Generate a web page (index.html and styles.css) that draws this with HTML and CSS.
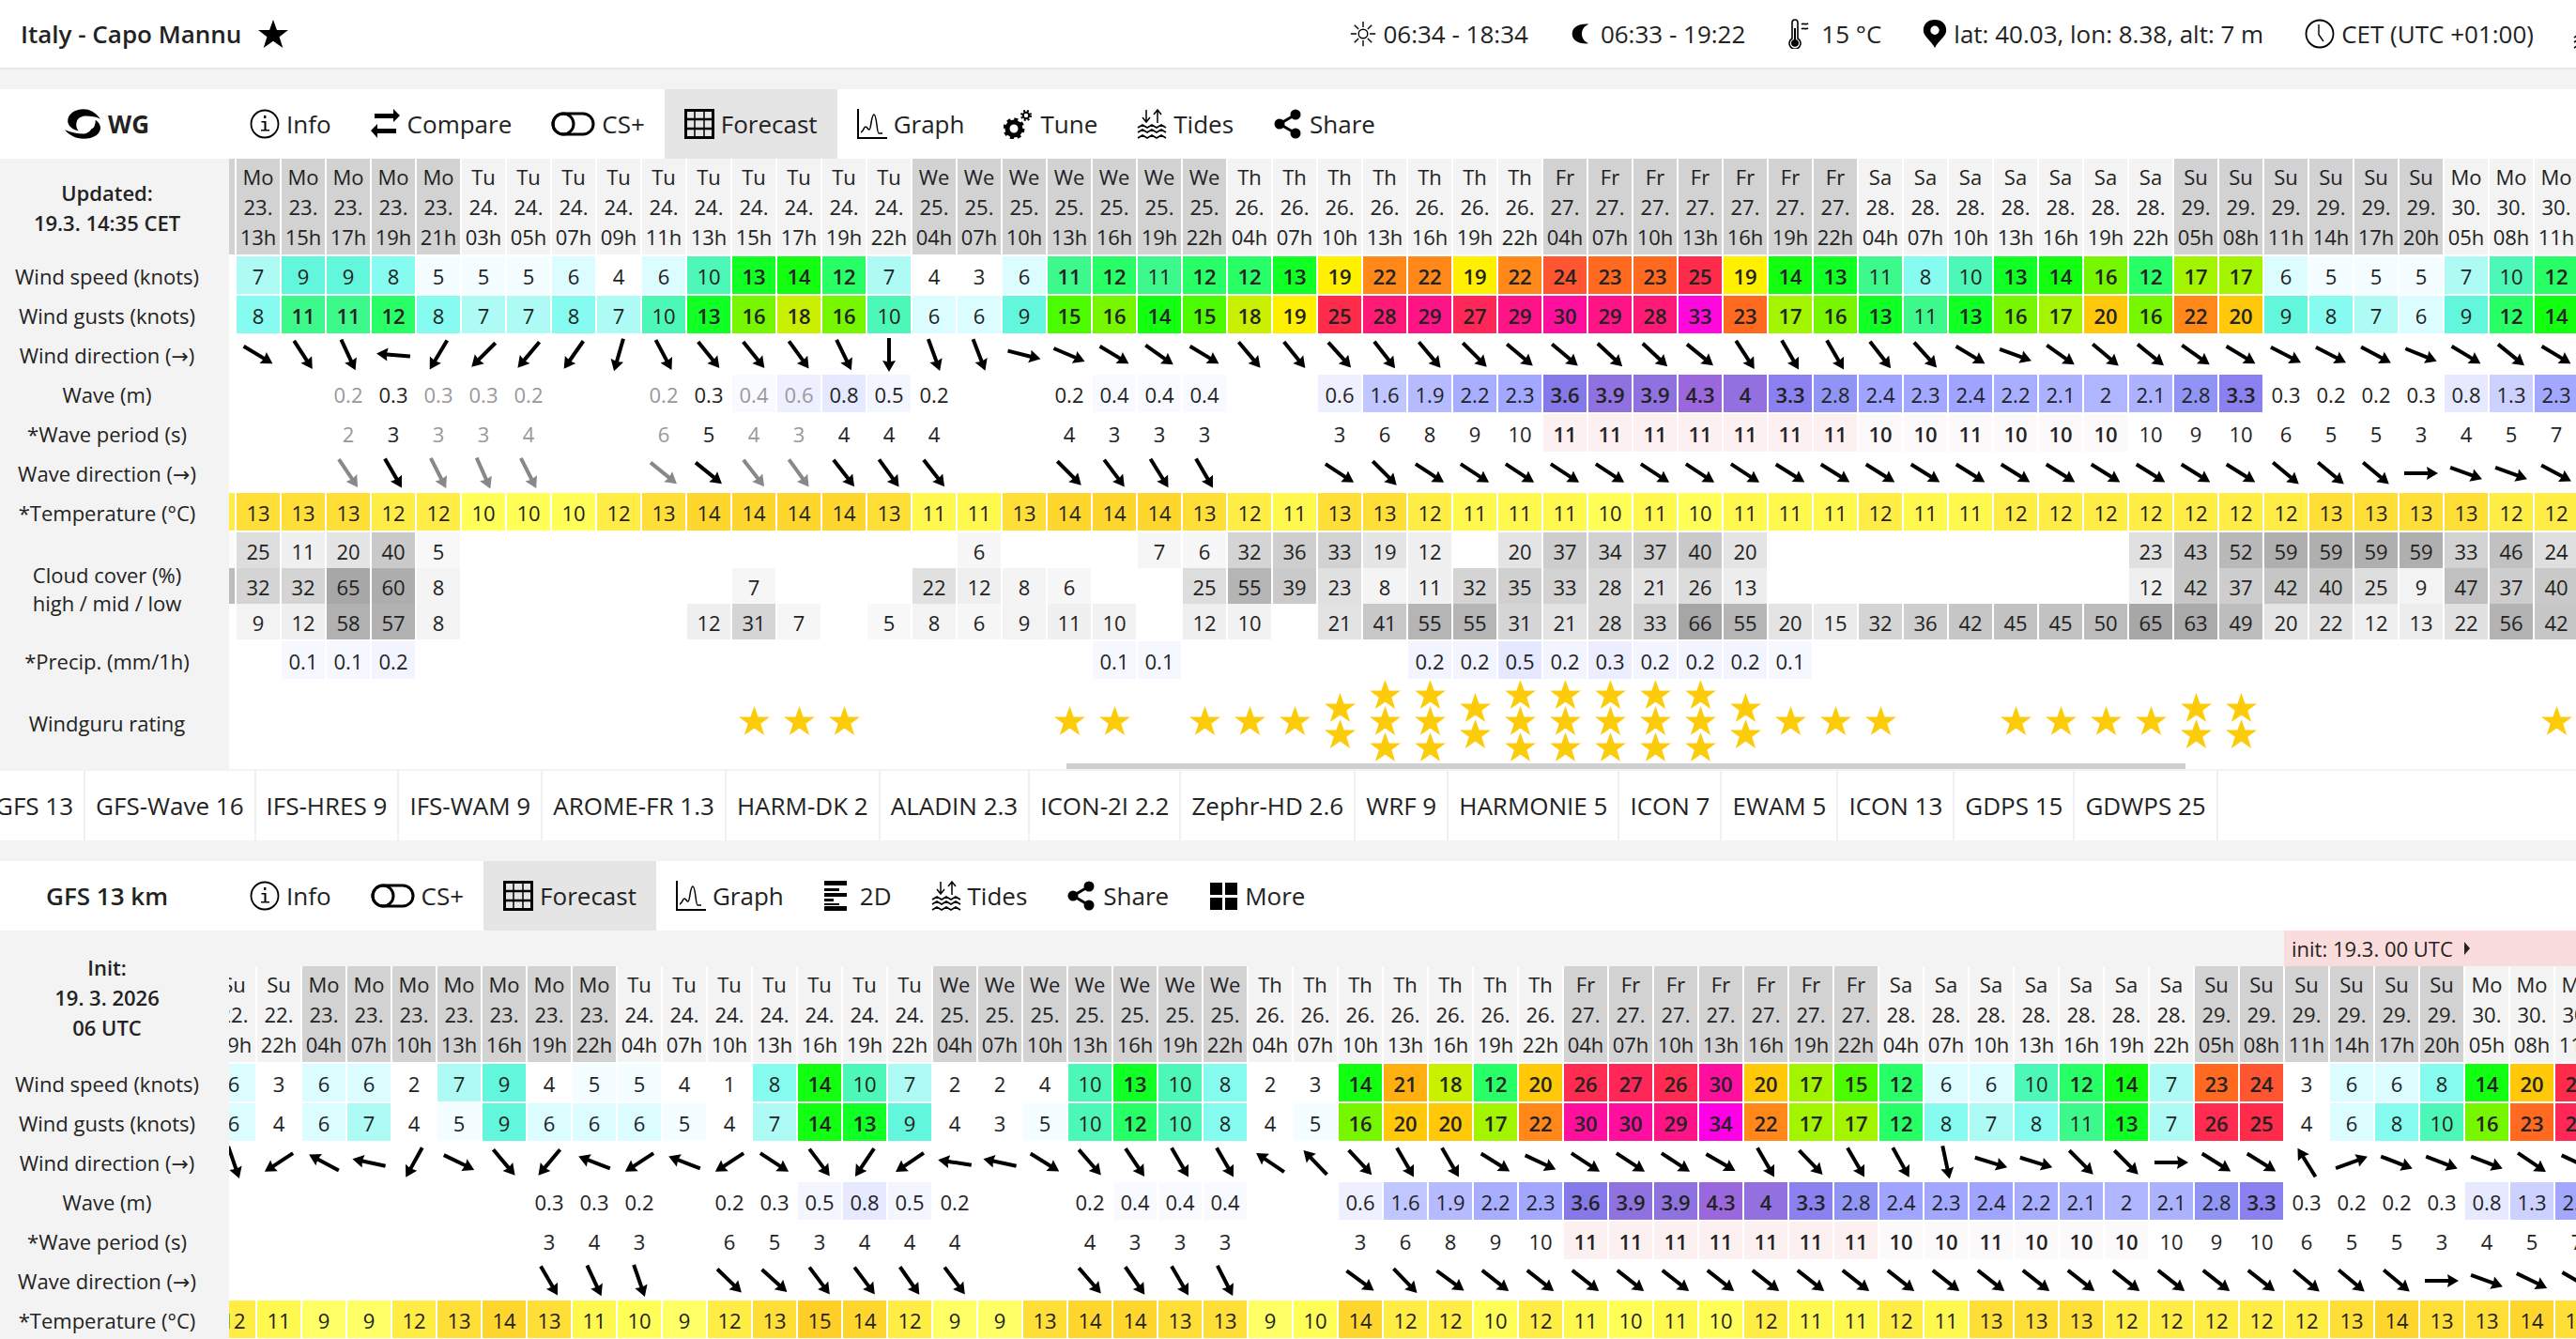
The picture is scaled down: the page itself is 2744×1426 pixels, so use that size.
FILE: index.html
```html
<!DOCTYPE html>
<html lang="en">
<head>
  <meta charset="UTF-8" />
  <title>Italy - Capo Mannu</title>
  <link rel="stylesheet" href="styles.css">
</head>
<body>
  <svg class="sprite" xmlns="http://www.w3.org/2000/svg">
    <symbol id="i-sun" viewBox="0 0 32 32"><circle cx="16" cy="16" r="5.5" fill="none" stroke="#000" stroke-width="1.6"/><path d="M16 1v7M16 24v7M1 16h7M24 16h7M5.4 5.4l5 5M21.6 21.6l5 5M5.4 26.600l5-5M21.600 10.400l5-5" stroke="#000" stroke-width="1.600"/></symbol>
    <symbol id="i-moon" viewBox="0 0 32 32"><path d="M24 5C12 4 5 9 5 16s7 12 19 11c-5-2-8-6-8-11s3-9 8-11z"/></symbol>
    <symbol id="i-therm" viewBox="0 0 32 32"><path d="M7 3a3 3 0 0 1 6 0v17a6 6 0 1 1-6 0z" fill="none" stroke="#000" stroke-width="1.600" transform="translate(0 1)"/><path d="M9 10h2v12a4 4 0 1 1-2 0z"/><path d="M17 6c2-2 4 1 7-1M17 11c2-2 4 1 7-1" fill="none" stroke="#000" stroke-width="1.600"/></symbol>
    <symbol id="i-pin" viewBox="0 0 32 32"><path fill-rule="evenodd" d="M16 0C8 0 3 5 3 12c0 7 9 12 13 20 4-8 13-13 13-20C29 5 24 0 16 0zm0 7a5 5 0 1 1 0 10 5 5 0 0 1 0-10z"/></symbol>
    <symbol id="i-clock" viewBox="0 0 32 32"><circle cx="16" cy="16" r="14.500" fill="none" stroke="#000" stroke-width="1.800"/><path d="M15 6v11l5 7" fill="none" stroke="#000" stroke-width="1.400"/></symbol>
    <symbol id="i-info" viewBox="0 0 32 32"><circle cx="16" cy="16" r="14.500" fill="none" stroke="#000" stroke-width="1.800"/><path d="M15 7h2.400v3H15zM12.500 13h5v9H21v1.600h-9V22h3.500v-7.400h-3z"/></symbol>
    <symbol id="i-compare" viewBox="0 0 32 32"><path d="M4 5h20V0l7 7-7 7V10H4zM27 21H7v-5l-7 7 7 8v-5h20z"/></symbol>
    <symbol id="i-cs" viewBox="0 0 47 32"><rect x="2" y="5" width="43" height="22" rx="11" fill="none" stroke="#000" stroke-width="3"/><circle cx="13" cy="16" r="11" fill="none" stroke="#000" stroke-width="3"/></symbol>
    <symbol id="i-grid" viewBox="0 0 32 32"><path d="M1.500 1.500h29v29h-29z" fill="none" stroke="#000" stroke-width="3"/><path d="M11 2v28M21 2v28" stroke="#000" stroke-width="1.500"/><path d="M2 11h28M2 21h28" stroke="#000" stroke-width="2.500"/></symbol>
    <symbol id="i-graph" viewBox="0 0 32 32"><path d="M1 0v31h31" fill="none" stroke="#000" stroke-width="2"/><path d="M4 25c3-1 3-6 5-6s2 3 4 3 2-16 5-16 3 20 5 20 2 0 4 0" fill="none" stroke="#000" stroke-width="1.500"/></symbol>
    <symbol id="i-tune" viewBox="0 0 32 32"><circle cx="11" cy="21" r="7" fill="none" stroke="#000" stroke-width="5"/><circle cx="11" cy="21" r="10" fill="none" stroke="#000" stroke-width="3" stroke-dasharray="4 3.850"/><circle cx="24" cy="7" r="3.200" fill="none" stroke="#000" stroke-width="2"/><circle cx="24" cy="7" r="5" fill="none" stroke="#000" stroke-width="2" stroke-dasharray="2 2"/></symbol>
    <symbol id="i-tides" viewBox="0 0 32 32"><path d="M10 1v12M6 9l4 5 4-5M22 15V1M18 6l4-5 4 5" fill="none" stroke="#000" stroke-width="1.500"/><path d="M1 20l5-3 5 3 5-3 5 3 5-3 5 3M1 25l5-3 5 3 5-3 5 3 5-3 5 3M1 31l5-3 5 3 5-3 5 3 5-3 5 3" fill="none" stroke="#000" stroke-width="1.700"/></symbol>
    <symbol id="i-share" viewBox="0 0 32 32"><circle cx="24" cy="6" r="5.500"/><circle cx="7" cy="16" r="5.500"/><circle cx="24" cy="26" r="5.500"/><path d="M24 6L7 16l17 10" fill="none" stroke="#000" stroke-width="3"/></symbol>
    <symbol id="i-2d" viewBox="0 0 32 32"><path d="M1 0h24v5H1zM1 8h16v3H1zM1 13h24v4H1zM1 19h10v3H1zM1 24h16v2H1zM1 27h24v5H1z"/></symbol>
    <symbol id="i-more" viewBox="0 0 32 32"><path d="M2 2h13v13H2zM18 2h13v13H18zM2 18h13v13H2zM18 18h13v13H18z"/></symbol>
    <symbol id="i-wg" viewBox="0 0 36 30"><path d="M36 10C31 3 25 0 19 0 10 0 3 5 3 12c0 5 5 9 11 10-2-2-3-6-2-9 1-4 5-6 9-6 6 0 11 1 15 3z"/><path d="M0 21c4 5 11 9 19 9 10 0 17-5 17-11 0-3-2-6-5-8 0 4-1 8-4 9-2 3-5 5-8 5-6 0-12-1-19-4z"/></symbol>
    <symbol id="i-star" viewBox="0 0 34 32"><path d="M17 0l4.200 11.800H34l-10 7.600L28 32 17 24.200 6 32l4-12.600L0 11.800h12.800z"/></symbol>
    <symbol id="i-arrow" viewBox="-20 -9 40 18"><path d="M-18-2L7-2 6-7 18 0 6 7 7 2-18 2z"/></symbol>
  </svg>

  <header class="topbar">
    <h1 class="spot">Italy - Capo Mannu <svg class="fav"><use href="#i-star"/></svg></h1>
    <div class="facts">
      <span class="fact"><svg class="ico ico-sun"><use href="#i-sun"/></svg>06:34 - 18:34</span>
      <span class="fact"><svg class="ico ico-moon"><use href="#i-moon"/></svg>06:33 - 19:22</span>
      <span class="fact"><svg class="ico ico-therm"><use href="#i-therm"/></svg>15 °C</span>
      <span class="fact"><svg class="ico ico-pin"><use href="#i-pin"/></svg>lat: 40.03, lon: 8.38, alt: 7 m</span>
      <span class="fact"><svg class="ico ico-clock"><use href="#i-clock"/></svg>CET (UTC +01:00)</span>
      <span class="fact"><svg class="ico"><use href="#i-tides"/></svg></span>
    </div>
  </header>

  <section class="panel">
    <nav class="tabs">
      <div class="tabs-title"><svg class="ico ico-wg"><use href="#i-wg"/></svg>WG</div>
      <a class="tab"><svg class="ico"><use href="#i-info"/></svg>Info</a>
      <a class="tab"><svg class="ico"><use href="#i-compare"/></svg>Compare</a>
      <a class="tab"><svg class="ico ico-cs"><use href="#i-cs"/></svg>CS+</a>
      <a class="tab active"><svg class="ico"><use href="#i-grid"/></svg>Forecast</a>
      <a class="tab"><svg class="ico"><use href="#i-graph"/></svg>Graph</a>
      <a class="tab"><svg class="ico"><use href="#i-tune"/></svg>Tune</a>
      <a class="tab"><svg class="ico"><use href="#i-tides"/></svg>Tides</a>
      <a class="tab"><svg class="ico"><use href="#i-share"/></svg>Share</a>
    </nav>
    <div class="fc">
      <div class="labels">
        <div class="lbl lbl-head"><b>Updated:</b><b>19.3. 14:35 CET</b></div>
        <div class="lbl">Wind speed (knots)</div>
        <div class="lbl">Wind gusts (knots)</div>
        <div class="lbl"><span>Wind direction (<span class="arw">→</span>)</span></div>
        <div class="lbl">Wave (m)</div>
        <div class="lbl">*Wave period (s)</div>
        <div class="lbl"><span>Wave direction (<span class="arw">→</span>)</span></div>
        <div class="lbl">*Temperature (°C)</div>
        <div class="lbl lbl-cloud"><span>Cloud cover (%)</span><span>high / mid / low</span></div>
        <div class="lbl">*Precip. (mm/1h)</div>
        <div class="lbl lbl-rating">Windguru rating</div>
      </div>
      <div class="scroller">
        <div class="track track-wg" id="wg"></div>
        <div class="scrollbar"></div>
      </div>
    </div>
  </section>

  <nav class="models">
    <a class="model model-first">GFS 13</a>
    <a class="model">GFS-Wave 16</a>
    <a class="model">IFS-HRES 9</a>
    <a class="model">IFS-WAM 9</a>
    <a class="model">AROME-FR 1.3</a>
    <a class="model">HARM-DK 2</a>
    <a class="model">ALADIN 2.3</a>
    <a class="model">ICON-2I 2.2</a>
    <a class="model">Zephr-HD 2.6</a>
    <a class="model">WRF 9</a>
    <a class="model">HARMONIE 5</a>
    <a class="model">ICON 7</a>
    <a class="model">EWAM 5</a>
    <a class="model">ICON 13</a>
    <a class="model">GDPS 15</a>
    <a class="model">GDWPS 25</a>
  </nav>

  <section class="panel panel-gfs">
    <nav class="tabs">
      <div class="tabs-title tabs-title-b">GFS 13 km</div>
      <a class="tab"><svg class="ico"><use href="#i-info"/></svg>Info</a>
      <a class="tab"><svg class="ico ico-cs"><use href="#i-cs"/></svg>CS+</a>
      <a class="tab active"><svg class="ico"><use href="#i-grid"/></svg>Forecast</a>
      <a class="tab"><svg class="ico"><use href="#i-graph"/></svg>Graph</a>
      <a class="tab"><svg class="ico"><use href="#i-2d"/></svg>2D</a>
      <a class="tab"><svg class="ico"><use href="#i-tides"/></svg>Tides</a>
      <a class="tab"><svg class="ico"><use href="#i-share"/></svg>Share</a>
      <a class="tab"><svg class="ico"><use href="#i-more"/></svg>More</a>
    </nav>
    <div class="fc">
      <div class="labels">
        <div class="lbl lbl-head lbl-head-b"><b>Init:</b><b>19. 3. 2026</b><b>06 UTC</b></div>
        <div class="lbl">Wind speed (knots)</div>
        <div class="lbl">Wind gusts (knots)</div>
        <div class="lbl"><span>Wind direction (<span class="arw">→</span>)</span></div>
        <div class="lbl">Wave (m)</div>
        <div class="lbl">*Wave period (s)</div>
        <div class="lbl"><span>Wave direction (<span class="arw">→</span>)</span></div>
        <div class="lbl">*Temperature (°C)</div>
      </div>
      <div class="scroller">
        <div class="initrow"><span class="initbadge">init: 19.3. 00 UTC <i class="tri"></i></span></div>
        <div class="track track-gfs" id="gfs"></div>
      </div>
    </div>
  </section>

  <script>
    // day runs: [name, date, isDark, hours]
    const h3 = '04 07 10 13 16 19 22';
    const wgDays = [
      ['Mo', 23, 1, '11 13 15 17 19 21'],
      ['Tu', 24, 0, '03 05 07 09 11 13 15 17 19 22'],
      ['We', 25, 1, h3], ['Th', 26, 0, h3], ['Fr', 27, 1, h3], ['Sa', 28, 0, h3],
      ['Su', 29, 1, '05 08 11 14 17 20'],
      ['Mo', 30, 0, '05 08 11']
    ];
    const gfsDays = [
      ['Su', 22, 0, '19 22'],
      ['Mo', 23, 1, h3], ['Tu', 24, 0, h3], ['We', 25, 1, h3], ['Th', 26, 0, h3], ['Fr', 27, 1, h3], ['Sa', 28, 0, h3],
      ['Su', 29, 1, '05 08 11 14 17 20'],
      ['Mo', 30, 0, '05 08 11']
    ];

    // "_" = empty, "~" = greyed out, "!" = bold, "*" = bold on a paler cell.
    // First value of each row is the clipped column.
    const wg = {
      speed: '_ 7 9 9 8 5 5 5 6 4 6 10 13 14 12 7 4 3 6 11! 12 11 12 12 13 19 22 22 19 22 24 23 23 25 19 14 13 11 8 10 13 14 16 12 17 17 6 5 5 5 7 10 12',
      gust: '_ 8 11! 11! 12 8 7 7 8 7 10 13 16 18 16 10 6 6 9 15 16 14 15 18 19 25 28 29 27 29 30 29 28 33 23 17 16 13 11 13 16 17 20 16 22 20 9 8 7 6 9 12 14',
      dir: '_ 31 57 65 185 121 135 130 125 106 62 51 51 54 64 90 70 69 14 23 31 35 31 50 51 48 52 50 45 40 40 43 43 39 57 60 60 52 48 31 20 35 40 39 35 31 27 27 28 22 31 39 31',
      wave: '_ _ _ ~0.2 0.3 ~0.3 ~0.3 ~0.2 _ _ ~0.2 0.3 ~0.4 ~0.6 0.8 0.5 0.2 _ _ 0.2 0.4 0.4 0.4 _ _ 0.6 1.6 1.9 2.2 2.3 3.6 3.9 3.9 4.3 4 3.3 2.8 2.4 2.3 2.4 2.2 2.1 2 2.1 2.8 3.3 0.3 0.2 0.2 0.3 0.8 1.3 2.3',
      period: '_ _ _ ~2 3 ~3 ~3 ~4 _ _ ~6 5 ~4 ~3 4 4 4 _ _ 4 3 3 3 _ _ 3 6 8 9 10 11! 11! 11! 11! 11! 11! 11! 10* 10* 11* 10* 10* 10* 10 9 10 6 5 5 3 4 5 7',
      wdir: '_ _ _ ~56 60 ~63 ~66 ~63 _ _ ~39 39 ~52 ~54 52 54 52 _ _ 45 53 58 60 _ _ 33 45 33 33 33 33 33 33 33 33 32 32 32 32 32 32 32 32 32 32 32 40 40 40 0 20 20 28',
      temp: '12 13 13 13 12 12 10 10 10 12 13 14 14 14 14 13 11 11 13 14 14 14 13 12 11 13 13 12 11 11 11 10 11 10 11 11 11 12 11 11 12 12 12 12 12 12 12 13 13 13 13 12 12 13',
      hi: '4 25 11 20 40 5 _ _ _ _ _ _ _ _ _ _ _ 6 _ _ _ 7 6 32 36 33 19 12 _ 20 37 34 37 40 20 _ _ _ _ _ _ _ _ 23 43 52 59 59 59 59 33 46 24',
      mid: '50 32 32 65 60 8 _ _ _ _ _ _ 7 _ _ _ 22 12 8 6 _ _ 25 55 39 23 8 11 32 35 33 28 21 26 13 _ _ _ _ _ _ _ _ 12 42 37 42 40 25 9 47 37 40',
      low: '_ 9 12 58 57 8 _ _ _ _ _ 12 31 7 _ 5 8 6 9 11 10 _ 12 10 _ 21 41 55 55 31 21 28 33 66 55 20 15 32 36 42 45 45 50 65 63 49 20 22 12 13 22 56 42',
      rain: '_ _ 0.1 0.1 0.2 _ _ _ _ _ _ _ _ _ _ _ _ _ _ _ 0.1 0.1 _ _ _ _ _ 0.2 0.2 0.5 0.2 0.3 0.2 0.2 0.2 0.1',
      stars: '0 0 0 0 0 0 0 0 0 0 0 0 1 1 1 0 0 0 0 1 1 0 1 1 1 2 3 3 2 3 3 3 3 3 2 1 1 1 0 0 1 1 1 1 2 2 0 0 0 0 0 0 1'
    };
    const gfs = {
      speed: '6 3 6 6 2 7 9 4 5 5 4 1 8 14 10 7 2 2 4 10 13 10 8 2 3 14 21 18 12 20 26 27 26 30 20 17 15 12 6 6 10 12 14 7 23 24 3 6 6 8 14 20 25',
      gust: '6 4 6 7 4 5 9 6 6 6 5 4 7 14 13 9 4 3 5 10 12 10 8 4 5 16 20 20 17 22 30 30 29 34 22 17 17 12 8 7 8 11 13 7 26 25 4 6 8 10 16 23 27',
      dir: '71 147 208 192 119 26 50 130 201 147 201 147 33 53 124 146 189 192 32 49 56 60 60 214 226 47 60 60 32 25 33 33 33 30 60 46 60 61 78 17 17 45 45 0 32 32 238 340 21 21 21 34 25',
      wave: '_ _ _ _ _ _ _ 0.3 0.3 0.2 _ 0.2 0.3 0.5 0.8 0.5 0.2 _ _ 0.2 0.4 0.4 0.4 _ _ 0.6 1.6 1.9 2.2 2.3 3.6 3.9 3.9 4.3 4 3.3 2.8 2.4 2.3 2.4 2.2 2.1 2 2.1 2.8 3.3 0.3 0.2 0.2 0.3 0.8 1.3 2.3',
      period: '_ _ _ _ _ _ _ 3 4 3 _ 6 5 3 4 4 4 _ _ 4 3 3 3 _ _ 3 6 8 9 10 11! 11! 11! 11! 11! 11! 11! 10* 10* 11* 10* 10* 10* 10 9 10 6 5 5 3 4 5 7',
      wdir: '_ _ _ _ _ _ _ 60 65 71 _ 44 42 53 53 55 53 _ _ 49 55 60 63 _ _ 36 46 36 38 38 38 38 38 38 38 38 38 38 38 38 38 38 38 38 38 38 40 40 40 0 20 26 30',
      temp: '12 11 9 9 12 13 14 13 11 10 9 12 13 15 14 12 9 9 13 14 14 13 13 9 10 14 12 12 10 12 11 10 11 10 12 11 11 12 11 13 13 13 12 12 12 12 12 13 14 13 13 14 13'
    };

    const windColors = {
      0: '#ffffff', 1: '#ffffff', 2: '#ffffff', 3: '#ffffff', 4: '#ffffff', 5: '#f4fdff', 6: '#dcfdff', 7: '#aefbf6', 8: '#86fbf0', 9: '#62f6dc',
      10: '#4df7b8', 11: '#3df98c', 12: '#28ff66', 13: '#10ff24', 14: '#12ff12', 15: '#4cfb00', 16: '#76f700', 17: '#a2f400', 18: '#c8f000',
      19: '#fff000', 20: '#ffc808', 21: '#ffb010', 22: '#ff8818', 23: '#ff6a20', 24: '#ff5530', 25: '#ff2b4b', 26: '#ff2b50', 27: '#ff2658',
      28: '#ff1a78', 29: '#ff1488', 30: '#ff0f9e', 33: '#ff08dc', 34: '#ff00e6'
    };
    const waveColors = {
      0.4: '#f9faff', 0.5: '#f3f5ff', 0.6: '#eef0ff', 0.8: '#e6e9ff', 1.3: '#cdd1ff', 1.6: '#c0c6ff', 1.9: '#b6bbff', 2: '#b0b5ff', 2.1: '#adb2ff',
      2.2: '#a8aeff', 2.3: '#a2a8ff', 2.4: '#9ea4ff', 2.8: '#8f94f5', 3.3: '#8a80f0', 3.6: '#8578e8', 3.9: '#8f72e0', 4: '#9270e0', 4.3: '#9a68dc'
    };
    const tempColors = { 9: '#ffff66', 10: '#ffff58', 11: '#fff84e', 12: '#ffec44', 13: '#ffde38', 14: '#ffd62e', 15: '#ffcf28' };
    const rainColors = { 0.1: '#f6f8ff', 0.2: '#f2f4ff', 0.3: '#eceeff', 0.5: '#e6e8ff' };

    function grey(v) {
      const c = Math.round(255 - v * 1.35);
      return `rgb(${c},${c},${c})`;
    }

    function parse(s) {
      const text = s.replace(/[~!*]/g, '');
      return {
        text: text,
        num: parseFloat(text),
        faded: s[0] === '~',
        strong: s.endsWith('!') || s.endsWith('*'),
        pale: s.endsWith('*')
      };
    }

    function cell(bg, cls, html) {
      const style = bg ? ` style="background-color:${bg}"` : '';
      return `<div class="cell ${cls}"${style}>${html}</div>`;
    }

    function numRow(src, kind) {
      return src.split(' ').map((s, i) => {
        if (s === '_') return cell('', '', '');
        const v = parse(s);
        let bg = '', cls = v.faded ? 'faded' : '';
        if (kind === 'wind') { bg = windColors[v.num]; if (v.num >= 12 || v.strong) cls += ' strong'; }
        if (kind === 'wave') { bg = waveColors[v.num]; if (v.num >= 3) cls += ' strong'; }
        if (kind === 'period' && v.strong) { cls += ' strong'; bg = v.pale ? '#fbf9fa' : '#fdf0f0'; }
        if (kind === 'temp') bg = tempColors[v.num];
        if (kind === 'rain') bg = rainColors[v.num];
        return cell(bg, cls, (i === 0 && src === wg.temp) ? '' : v.text);
      }).join('');
    }

    function cloudRow(src) {
      return src.split(' ').map((s, i) => {
        if (s === '_') return cell('', '', '');
        return cell(grey(parseFloat(s)), '', i === 0 ? '' : s);
      }).join('');
    }

    function arrowRow(src) {
      return src.split(' ').map(s => {
        if (s === '_') return cell('', '', '');
        const v = parse(s);
        return cell('', v.faded ? 'faded' : '',
          `<svg class="arrow" style="transform:rotate(${v.num}deg)"><use href="#i-arrow"/></svg>`);
      }).join('');
    }

    function starRow(src) {
      return src.split(' ').map(s => {
        let html = '';
        for (let i = 0; i < parseInt(s, 10); i++) html += '<svg class="star"><use href="#i-star"/></svg>';
        return `<div class="cell cell-stars">${html}</div>`;
      }).join('');
    }

    function headRow(days, blankFirst) {
      let out = '';
      let n = 0;
      days.forEach(d => {
        d[3].split(' ').forEach(h => {
          const txt = (blankFirst && n === 0) ? '' : `<span>${d[0]}</span><span>${d[1]}.</span><span>${h}h</span>`;
          out += `<div class="cell head${d[2] ? ' dark' : ''}">${txt}</div>`;
          n++;
        });
      });
      return out;
    }

    function row(cls, html) {
      return `<div class="row ${cls}">${html}</div>`;
    }

    function render(el, days, d) {
      let html = row('row-head', headRow(days, !!d.hi));
      html += row('', numRow(d.speed, 'wind'));
      html += row('', numRow(d.gust, 'wind'));
      html += row('', arrowRow(d.dir));
      html += row('', numRow(d.wave, 'wave'));
      html += row('', numRow(d.period, 'period'));
      html += row('', arrowRow(d.wdir));
      html += row('', numRow(d.temp, 'temp'));
      if (d.hi) {
        html += row('row-cloud row-cloud-top', cloudRow(d.hi));
        html += row('row-cloud', cloudRow(d.mid));
        html += row('row-cloud row-cloud-bot', cloudRow(d.low));
        html += row('', numRow(d.rain, 'rain'));
        html += row('row-rating', starRow(d.stars));
      }
      el.innerHTML = html;
    }

    render(document.getElementById('wg'), wgDays, wg);
    render(document.getElementById('gfs'), gfsDays, gfs);
  </script>
</body>
</html>
```

FILE: styles.css
```css
* {
  box-sizing: border-box;
}
html, body {
  height: 100%;
}
body {
  margin: 0;
  width: 2744px;
  height: 1426px;
  overflow: hidden;
  background: #f3f3f3;
  color: #222;
  font-family: "Open Sans", "Noto Sans", sans-serif;
  font-size: 26px;
}
.sprite {
  display: none;
}
b {
  font-weight: 600;
}

/* top bar */
.topbar {
  display: flex;
  align-items: center;
  height: 74px;
  padding-left: 22px;
  background: #fff;
  border-bottom: 2px solid #e8e8e8;
  margin-bottom: 21px;
  white-space: nowrap;
}
.spot {
  display: flex;
  align-items: center;
  margin: 0;
  font-size: 26px;
  font-weight: 600;
}
.fav {
  width: 32px;
  height: 30px;
  margin-left: 18px;
}
.facts {
  display: flex;
  margin-left: auto;
  gap: 42px;
  margin-right: -29px;
  font-size: 26px;
}
.fact {
  display: flex;
  align-items: center;
  gap: 5px;
}
.ico {
  width: 32px;
  height: 32px;
  flex: none;
}
.ico-sun {
  height: 28px;
}
.ico-moon {
  width: 30px;
}
.ico-therm {
  width: 34px;
}
.ico-pin {
  width: 30px;
}
.ico-clock {
  width: 36px;
}
.ico-cs {
  width: 47px;
}
.ico-wg {
  width: 38px;
}

/* tabs */
.tabs {
  display: flex;
  height: 74px;
  background: #fff;
  white-space: nowrap;
}
.tabs-title {
  flex: 0 0 245px;
  display: flex;
  align-items: center;
  justify-content: center;
  gap: 8px;
  padding-right: 17px;
  font-weight: 700;
}
.tabs-title-b {
  font-weight: 600;
}
.tab {
  display: flex;
  align-items: center;
  gap: 7px;
  padding: 0 21px;
}
.tab.active {
  background: #e5e5e5;
}

/* forecast block */
.fc {
  display: flex;
}
.labels {
  flex: 0 0 244px;
  padding-right: 16px;
  font-size: 22px;
  text-align: center;
}
.lbl {
  height: 42px;
  padding-top: 2px;
  display: flex;
  flex-direction: column;
  align-items: center;
  justify-content: center;
  white-space: nowrap;
}
.arw {
  font-family: "DejaVu Sans", sans-serif;
}
.lbl-head {
  height: 103px;
  padding-top: 0;
  line-height: 32px;
}
.lbl-head-b {
  height: 141px;
}
.lbl-cloud {
  height: 116px;
  padding-top: 5px;
  line-height: 30px;
}
.lbl-rating {
  height: 90px;
}
.scroller {
  position: relative;
  flex: 1;
  min-width: 0;
  overflow: hidden;
}
.track-wg {
  margin-left: -41px;
  background: #fff;
}
.track-gfs {
  margin-left: -19px;
  background: #fff;
}
.scrollbar {
  position: absolute;
  left: 892px;
  bottom: 0;
  width: 1192px;
  height: 6px;
  background: #d0d0d0;
}
.initrow {
  display: flex;
  justify-content: flex-end;
  height: 38px;
}
.initbadge {
  display: flex;
  align-items: center;
  gap: 12px;
  width: 311px;
  padding-left: 8px;
  background: #fbdcdc;
  font-size: 22px;
}
.tri {
  width: 0;
  height: 0;
  border-left: 6px solid #222;
  border-top: 7px solid transparent;
  border-bottom: 7px solid transparent;
}

/* table rows */
.row {
  display: flex;
  height: 42px;
}
.cell {
  flex: 0 0 48px;
  width: 48px;
  padding-top: 2px;
  border: 1px solid #fff;
  display: flex;
  align-items: center;
  justify-content: center;
  font-size: 22px;
  line-height: 1;
  background-clip: padding-box;
}
.strong {
  font-weight: 600;
}
.faded {
  color: #999;
  fill: #888;
}
.head {
  flex-direction: column;
  padding-top: 0;
  border-width: 0 1px 1px;
  background-color: #f3f3f3;
  line-height: 32px;
  white-space: nowrap;
}
.head.dark {
  background-color: #d2d2d2;
}
.row-head {
  height: 103px;
}
.row-cloud {
  height: 38px;
}
.row-cloud .cell {
  border-width: 0 1px;
}
.row-cloud-top {
  height: 39px;
  padding-top: 1px;
}
.row-cloud-bot {
  height: 39px;
  padding-bottom: 1px;
}
.row-rating {
  height: 95px;
}
.cell-stars {
  flex-direction: column;
  padding-top: 0;
  padding-bottom: 8px;
}
.star {
  flex: none;
  width: 33px;
  height: 31px;
  margin: -1.500px 0;
  fill: #fccc0a;
}
.arrow {
  width: 40px;
  height: 18px;
  flex: none;
}

/* model strip */
.models {
  display: flex;
  height: 74px;
  margin-top: 2px;
  margin-bottom: 22px;
  background: #fff;
  white-space: nowrap;
}
.model {
  display: flex;
  align-items: center;
  padding: 0 11px;
  border-right: 2px solid #f0f0f0;
}
.model-first {
  margin-left: -5px;
  padding-left: 0;
}
```
